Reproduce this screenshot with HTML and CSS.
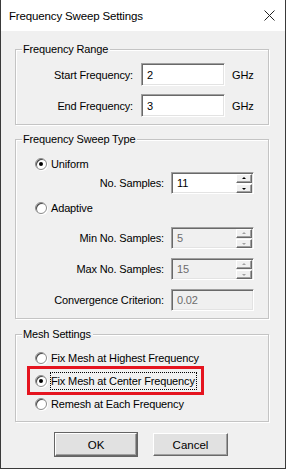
FILE: index.html
```html
<!DOCTYPE html>
<html lang="en">

<head>
    <meta charset="UTF-8">
    <meta name="viewport" content="width=device-width, initial-scale=1.0">
    <title>Frequency Sweep Settings</title>
    <link rel="stylesheet" href="styles.css">
</head>

<body>
    <div class="window">
        <div class="titlebar">
            <span class="title">Frequency Sweep Settings</span>
            <svg class="close" width="11" height="11" viewBox="0 0 11 11" fill="none" stroke="#222" stroke-width="1">
                <path d="M0.5 0.5 L10.5 10.5 M10.5 0.5 L0.5 10.5" />
            </svg>
        </div>

        <div class="content">
            <div class="group range">
                <span class="legend">Frequency Range</span>
                <div class="field-row">
                    <label class="label">Start Frequency:</label>
                    <div class="edit">2</div>
                    <span class="unit">GHz</span>
                </div>
                <div class="field-row">
                    <label class="label">End Frequency:</label>
                    <div class="edit">3</div>
                    <span class="unit">GHz</span>
                </div>
            </div>

            <div class="group sweep">
                <span class="legend">Frequency Sweep Type</span>
                <div class="radio-row first">
                    <span class="radio checked"></span>
                    <span>Uniform</span>
                </div>
                <div class="spin-row">
                    <label class="label">No. Samples:</label>
                    <div class="edit spin">
                        <span class="value">11</span>
                        <span class="spin-btns">
                            <span class="spin-btn up"></span>
                            <span class="spin-btn down"></span>
                        </span>
                    </div>
                </div>
                <div class="radio-row adaptive">
                    <span class="radio"></span>
                    <span>Adaptive</span>
                </div>
                <div class="spin-row min">
                    <label class="label">Min No. Samples:</label>
                    <div class="edit spin disabled">
                        <span class="value">5</span>
                        <span class="spin-btns">
                            <span class="spin-btn up"></span>
                            <span class="spin-btn down"></span>
                        </span>
                    </div>
                </div>
                <div class="spin-row">
                    <label class="label">Max No. Samples:</label>
                    <div class="edit spin disabled">
                        <span class="value">15</span>
                        <span class="spin-btns">
                            <span class="spin-btn up"></span>
                            <span class="spin-btn down"></span>
                        </span>
                    </div>
                </div>
                <div class="spin-row">
                    <label class="label">Convergence Criterion:</label>
                    <div class="edit spin disabled">
                        <span class="value">0.02</span>
                    </div>
                </div>
            </div>

            <div class="group mesh">
                <span class="legend">Mesh Settings</span>
                <div class="radio-row mesh-row">
                    <span class="radio"></span>
                    <span>Fix Mesh at Highest Frequency</span>
                </div>
                <div class="radio-row mesh-row">
                    <span class="radio checked"></span>
                    <span class="focus">Fix Mesh at Center Frequency</span>
                </div>
                <div class="radio-row mesh-row">
                    <span class="radio"></span>
                    <span>Remesh at Each Frequency</span>
                </div>
                <div class="highlight"></div>
            </div>

            <div class="buttons">
                <button class="btn default">OK</button>
                <button class="btn">Cancel</button>
            </div>
        </div>
    </div>
</body>

</html>
```

FILE: styles.css
```css
* {
    margin: 0;
    padding: 0;
    box-sizing: border-box;
}

body {
    font-family: "Liberation Sans", Arial, sans-serif;
    font-size: 11px;
    letter-spacing: -0.15px;
    color: #000;
    background: #fff;
}

.window {
    width: 286px;
    height: 469px;
    background: #f0f0f0;
    border: 1px solid #3a3a3a;
    border-top: none;
    overflow: hidden;
}

.titlebar {
    height: 31px;
    background: #fff;
    display: flex;
    align-items: center;
    justify-content: space-between;
    padding: 0 10px 0 8px;
}

.title {
    font-size: 11.5px;
    line-height: 16px;
}

.close {
    display: block;
}

.content {
    padding: 0 16px 0 14px;
}

/* group boxes */
.group {
    position: relative;
    border: 1px solid #c4c4c4;
    box-shadow: inset 1px 1px 0 #fff, 1px 1px 0 #fff;
    display: flex;
    flex-direction: column;
}

.legend {
    position: absolute;
    top: -9px;
    left: 6px;
    padding: 0 2px 0 1px;
    background: #f0f0f0;
    line-height: 16px;
}

.range {
    margin-top: 18px;
    padding: 13px 0 7px;
    gap: 8px;
}

.sweep {
    margin-top: 14px;
    padding: 16px 0 7px;
}

.mesh {
    margin-top: 15px;
    padding: 12px 0 6px;
}

.label {
    text-align: right;
    line-height: 16px;
}

.field-row {
    display: grid;
    grid-template-columns: 117px 84px auto;
    column-gap: 8px;
    align-items: center;
    height: 23px;
}

.unit {
    margin-left: -1px;
    line-height: 16px;
}

/* edit boxes */
.edit {
    height: 23px;
    background: #fff;
    border: 1px solid;
    border-color: #a0a0a0 #fff #fff #a0a0a0;
    box-shadow: inset 1px 1px 0 #696969, inset -1px -1px 0 #e3e3e3;
    padding: 0 0 0 5px;
    display: flex;
    align-items: center;
    line-height: 16px;
}

.spin-row {
    display: grid;
    grid-template-columns: 148px 83px;
    column-gap: 7px;
    align-items: center;
    height: 22px;
    margin-top: 9px;
}

.radio-row.first + .spin-row {
    margin-top: 0;
}

.spin-row.min {
    margin-top: 11px;
}

.spin {
    height: 22px;
    justify-content: space-between;
    padding-right: 1px;
}

.spin.disabled {
    background: #f0f0f0;
    color: #6d6d6d;
}

.spin-btns {
    display: flex;
    flex-direction: column;
    gap: 1px;
    width: 16px;
}

.spin-btn {
    position: relative;
    height: 9px;
    background: #f0f0f0;
    border: 1px solid;
    border-color: #fff #696969 #696969 #fff;
    box-shadow: inset -1px -1px 0 #a0a0a0;
}

.spin-btn::after {
    content: "";
    position: absolute;
    left: 5px;
    border-left: 2px solid transparent;
    border-right: 2px solid transparent;
}

.spin-btn.up::after {
    top: 2px;
    border-bottom: 2px solid #000;
}

.spin-btn.down::after {
    top: 3px;
    border-top: 2px solid #000;
}

.disabled .spin-btn.up::after {
    border-bottom-color: #a0a0a0;
}

.disabled .spin-btn.down::after {
    border-top-color: #a0a0a0;
}

/* radio buttons */
.radio-row {
    display: flex;
    align-items: center;
    gap: 4px;
    height: 16px;
    padding-left: 19px;
    line-height: 16px;
}

.radio-row.adaptive {
    margin-top: 6px;
}

.mesh-row {
    height: 22px;
}

.mesh-row + .mesh-row {
    margin-top: 1px;
}

.radio {
    position: relative;
    width: 12px;
    height: 12px;
    border-radius: 50%;
    background: #fff;
    border: 1px solid #8a8a8a;
    box-shadow: inset 1px 1px 0 #4a4a4a, 1px 1px 0 #fff;
    flex: none;
}

.radio.checked::after {
    content: "";
    position: absolute;
    left: 3px;
    top: 3px;
    width: 4px;
    height: 4px;
    border-radius: 50%;
    background: #000;
}

.focus {
    outline: 1px dotted #000;
    outline-offset: 0;
    padding: 0 1px 0 0;
}

.highlight {
    position: absolute;
    left: 11px;
    top: 31px;
    width: 177px;
    height: 29px;
    border: 3px solid #e5141f;
}

/* dialog buttons */
.buttons {
    display: flex;
    gap: 16px;
    margin: 11px 0 0 40px;
}

.btn {
    font-family: inherit;
    font-size: 11.5px;
    height: 23px;
    width: 75px;
    background: #e1e1e1;
    border: 1px solid;
    border-color: #fff #696969 #696969 #fff;
    box-shadow: inset -1px -1px 0 #a0a0a0;
    color: #000;
}

.btn.default {
    width: 82px;
    outline: 1px solid #646464;
}
```
